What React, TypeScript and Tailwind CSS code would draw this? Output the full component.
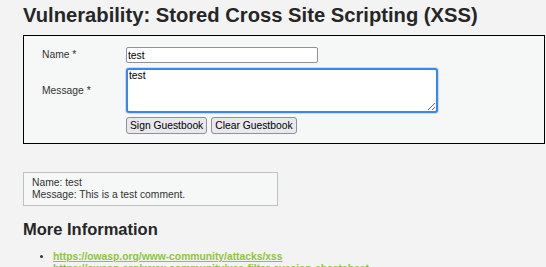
const font = { fontFamily: '"Liberation Sans", Arial, sans-serif' };

const App = () => {
  return (
    <div
      className="min-h-[267px] w-[546px] overflow-hidden bg-[#f3f3f3] pl-[23px] text-[10.3px] text-[#333]"
      style={font}
    >
      {/* Title */}
      <h1 className="pt-[4px] text-[20.2px] leading-[23px] font-bold text-[#262626]">
        Vulnerability: Stored Cross Site Scripting (XSS)
      </h1>

      {/* Guestbook form */}
      <div className="mt-[8px] w-[522px] border border-black bg-[#f6f7f7] pt-[11px] pb-[9px] pl-[18px]">
        <div className="flex items-center">
          <label className="w-[84px]">Name *</label>
          <input
            readOnly
            value="test"
            className="h-[16px] w-[192px] rounded-[2px] border border-[#8f8f9d] bg-white px-[1px] text-[10.3px] leading-[14px] text-black outline-none"
          />
        </div>
        <div className="mt-[5px] flex items-center">
          <label className="w-[84px]">Message *</label>
          <textarea
            readOnly
            defaultValue="test"
            className="h-[45px] w-[312px] rounded-[3px] border-2 border-[#3a85ee] bg-white px-[1px] text-[10.3px] leading-[12px] text-black shadow-[0_0_0_1px_#c9defb] outline-none"
          />
        </div>
        <div className="mt-[4px] flex gap-[4px] pl-[84px]">
          <button className="h-[17px] rounded-[3px] border border-[#8f8f9d] bg-[#e9e9ed] px-[3px] text-[10.3px] leading-[15px] text-black">
            Sign Guestbook
          </button>
          <button className="h-[17px] rounded-[3px] border border-[#8f8f9d] bg-[#e9e9ed] px-[3px] text-[10.3px] leading-[15px] text-black">
            Clear Guestbook
          </button>
        </div>
      </div>

      {/* Stored comment */}
      <div className="mt-[28px] w-[255px] border border-[#c0c0c0] bg-[#f6f7f7] py-[4px] pl-[8px] leading-[12px]">
        <div>Name: test</div>
        <div>Message: This is a test comment.</div>
      </div>

      {/* More info */}
      <h2 className="mt-[14px] text-[16.5px] leading-[19px] font-bold text-[#262626]">
        More Information
      </h2>
      <ul className="mt-[12px] list-disc pl-[30px] leading-[12px]">
        <li>
          <a className="font-bold text-[#8cc63e] underline" href="#">
            https://owasp.org/www-community/attacks/xss
          </a>
        </li>
        <li>
          <a className="font-bold text-[#8cc63e] underline" href="#">
            https://owasp.org/www-community/xss-filter-evasion-cheatsheet
          </a>
        </li>
      </ul>
    </div>
  );
};

export default App;
